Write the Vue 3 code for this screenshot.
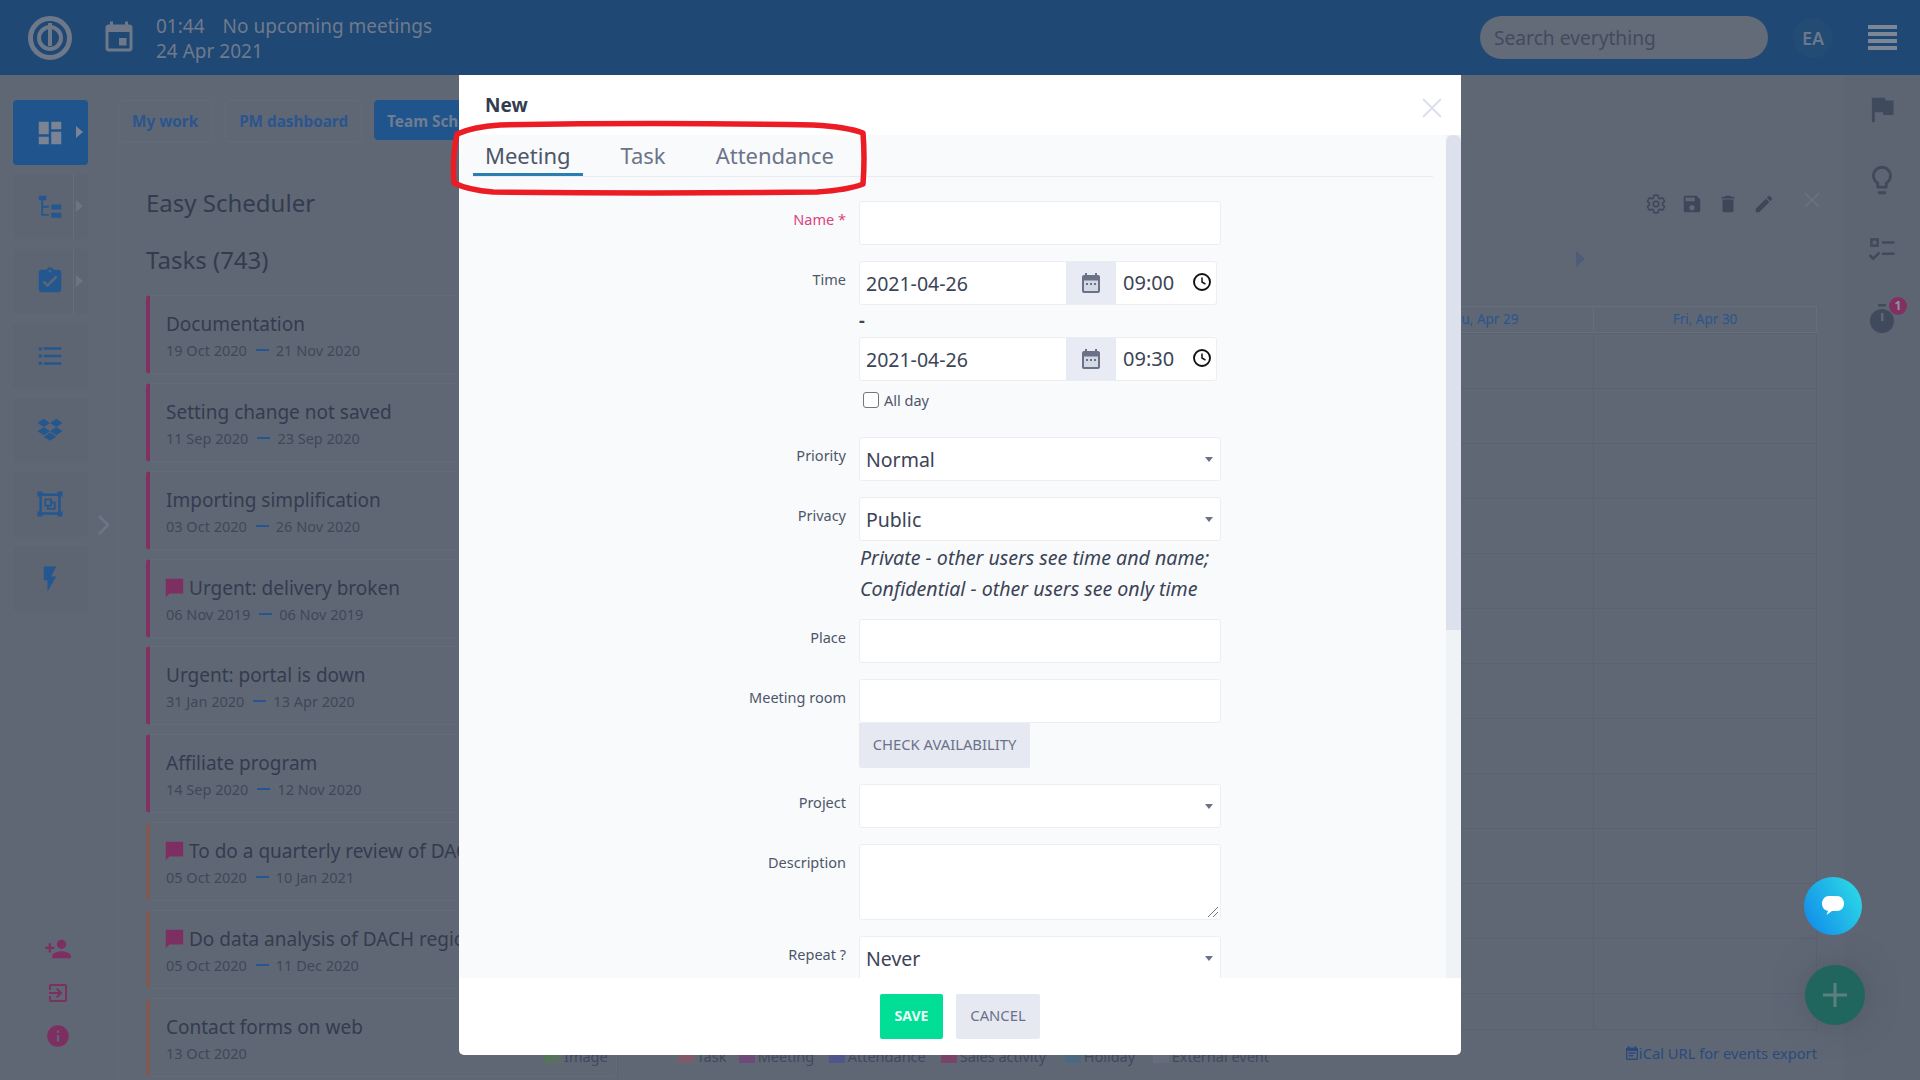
<template>
  <div class="page">
    <header class="topbar">
      <svg class="logo" width="46" height="46" viewBox="0 0 46 46" fill="none">
        <circle cx="23" cy="23" r="19.500" stroke="#6f7889" stroke-width="5"/>
        <circle cx="23" cy="23" r="11" stroke="#6f7889" stroke-width="4"/>
        <rect x="21" y="8" width="4" height="23" fill="#6f7889"/>
      </svg>
      <svg class="cal" width="36" height="36" viewBox="0 0 24 24"><path :d="icons.event" fill="#6f7889"/></svg>
      <div class="clock">
        <div><span class="time">01:44</span>No upcoming meetings</div>
        <div>24 Apr 2021</div>
      </div>
      <div class="search">Search everything</div>
      <div class="avatar">EA</div>
      <div class="burger"><i></i><i></i><i></i><i></i></div>
    </header>

    <div class="layout">
      <aside class="rail">
        <div v-for="(t, i) in tiles" :key="i" class="tile" :class="{ active: i === 0, split: t.arrow && i > 0 }">
          <svg width="30" height="30" viewBox="0 0 24 24"><path :d="t.d" :fill="i === 0 ? '#7a8494' : '#24578f'"/></svg>
          <span v-if="t.arrow" class="tile-arrow"></span>
        </div>
        <svg class="rail-chevron" width="16" height="24" viewBox="0 0 16 24" fill="none"><path d="M3 3l9 9-9 9" stroke="#6d7687" stroke-width="2.500"/></svg>
        <div class="rail-bottom">
          <svg width="28" height="28" viewBox="0 0 24 24"><path :d="icons.personAdd" fill="#7e2f62"/></svg>
          <svg width="24" height="24" viewBox="0 0 24 24"><path :d="icons.exit" fill="#7e2f62"/></svg>
          <svg width="26" height="26" viewBox="0 0 24 24"><path :d="icons.info" fill="#7e2f62"/></svg>
        </div>
      </aside>

      <main class="main">
        <nav class="pills">
          <span class="pill">My work</span>
          <span class="pill">PM dashboard</span>
          <span class="pill current">Team Schedule</span>
        </nav>
        <section class="card">
          <div class="tasks-col">
            <h2 class="sched-title">Easy Scheduler</h2>
            <h2 class="tasks-title">Tasks (743)</h2>
            <div v-for="t in tasks" :key="t.name" class="task" :class="{ brown: t.brown }">
              <div class="task-name">
                <svg v-if="t.flag" width="22" height="22" viewBox="0 0 24 24"><path :d="icons.message" fill="#7e2f62"/></svg>
                {{ t.name }}
              </div>
              <div class="task-dates">
                <span>{{ t.from }}</span>
                <template v-if="t.to"><span class="dash"></span><span>{{ t.to }}</span></template>
              </div>
            </div>
          </div>
          <div class="cal-col">
            <div class="toolbar">
              <svg width="22" height="22" viewBox="0 0 24 24" fill="none"><path :d="icons.gear" stroke="#3d4759" stroke-width="1.700"/><circle cx="12" cy="12" r="3" stroke="#3d4759" stroke-width="1.700"/></svg>
              <svg width="22" height="22" viewBox="0 0 24 24"><path :d="icons.save" fill="#3d4759"/></svg>
              <svg width="22" height="22" viewBox="0 0 24 24"><path :d="icons.trash" fill="#3d4759"/></svg>
              <svg width="22" height="22" viewBox="0 0 24 24"><path :d="icons.edit" fill="#3d4759"/></svg>
              <svg class="tool-x" width="18" height="18" viewBox="0 0 18 18" fill="none"><path d="M2 2l14 14M16 2L2 16" stroke="#6a7382" stroke-width="1.500"/></svg>
            </div>
            <div class="cal-nav"><span class="next"></span></div>
            <div class="cal-head">
              <span>Thu, Apr 29</span>
              <span>Fri, Apr 30</span>
            </div>
            <div class="cal-grid"></div>
            <div class="cal-foot">
              <div class="legend">
                <span class="leg-image"><i class="sw img"></i>Image</span>
                <span v-for="l in legend" :key="l.name" class="leg" :style="{ width: l.width + 'px' }"><i class="sw" :style="{ background: l.color }"></i>{{ l.name }}</span>
              </div>
              <div class="ical">
                <svg width="12" height="14" viewBox="3 1 18 20" preserveAspectRatio="none"><path :d="icons.note" fill="#2a4a7c"/></svg>iCal URL for events export
              </div>
            </div>
          </div>
        </section>
      </main>

      <aside class="side">
        <svg width="26" height="30" viewBox="3 3 18 19"><path :d="icons.flag" fill="#3f4a5d"/></svg>
        <svg width="34" height="34" viewBox="0 0 24 24"><path :d="icons.bulb" fill="#3f4a5d"/></svg>
        <svg width="30" height="30" viewBox="0 0 24 24" fill="none">
          <rect x="3.500" y="3.500" width="5" height="5" stroke="#3f4a5d" stroke-width="2"/>
          <path d="M12 6h10M12 15h10M2 16l3 3 5-5" stroke="#3f4a5d" stroke-width="2"/>
        </svg>
        <div class="timer">
          <svg width="30" height="32" viewBox="0 0 30 32"><rect x="11" y="1" width="8" height="2.500" fill="#3f4a5d"/><circle cx="15" cy="18" r="12" fill="#3f4a5d"/><rect x="14" y="10" width="2.500" height="8" fill="#5f6775"/></svg>
          <span class="badge">1</span>
        </div>
      </aside>
    </div>

    <div class="fab-chat">
      <svg width="24" height="22" viewBox="0 0 24 22"><path d="M8 1h8c4 0 7 3 7 7.500S20 16 16 16h-5l-5.500 4 1.500-4.100C3.500 15.400 1 12.500 1 8.500S4 1 8 1z" fill="#fff"/></svg>
    </div>
    <div class="fab-add">
      <svg width="24" height="24" viewBox="0 0 24 24"><path d="M10.500 0h3v10.500H24v3H13.500V24h-3V13.500H0v-3h10.500z" fill="#5d7f80"/></svg>
    </div>

    <div class="modal">
      <div class="modal-head">
        <span class="modal-title">New</span>
        <svg class="modal-close" width="20" height="20" viewBox="0 0 20 20" fill="none"><path d="M1 1l18 18M19 1L1 19" stroke="#dcdfe9" stroke-width="1.800"/></svg>
      </div>
      <div class="modal-body">
        <div class="tabs">
          <span class="tab active">Meeting</span>
          <span class="tab">Task</span>
          <span class="tab">Attendance</span>
        </div>

        <div class="row">
          <label class="req">Name *</label>
          <div class="field"><div class="input"></div></div>
        </div>

        <div class="row time-row">
          <label>Time</label>
          <div class="field">
            <div class="dt">
              <span class="dt-date">2021-04-26</span>
              <span class="dt-cal"><svg width="24" height="24" viewBox="0 0 24 24"><path :d="icons.dateFill" fill="#6a7288"/><path d="M5 9.500h14V20H5z" fill="#d5d9e4"/><path d="M7 12h2v2H7zM11 12h2v2h-2zM15 12h2v2h-2z" fill="#6a7288"/></svg></span>
              <span class="dt-time">09:00
                <svg width="20" height="20" viewBox="0 0 20 20" fill="none"><circle cx="10" cy="10" r="8" stroke="#111" stroke-width="1.900"/><path d="M10 5.500V10l3.500 2.200" stroke="#111" stroke-width="1.500"/></svg>
              </span>
            </div>
            <div class="sep">-</div>
            <div class="dt">
              <span class="dt-date">2021-04-26</span>
              <span class="dt-cal"><svg width="24" height="24" viewBox="0 0 24 24"><path :d="icons.dateFill" fill="#6a7288"/><path d="M5 9.500h14V20H5z" fill="#d5d9e4"/><path d="M7 12h2v2H7zM11 12h2v2h-2zM15 12h2v2h-2z" fill="#6a7288"/></svg></span>
              <span class="dt-time">09:30
                <svg width="20" height="20" viewBox="0 0 20 20" fill="none"><circle cx="10" cy="10" r="8" stroke="#111" stroke-width="1.900"/><path d="M10 5.500V10l3.500 2.200" stroke="#111" stroke-width="1.500"/></svg>
              </span>
            </div>
            <div class="allday"><span class="check"></span>All day</div>
          </div>
        </div>

        <div class="row">
          <label>Priority</label>
          <div class="field"><div class="input select">Normal</div></div>
        </div>

        <div class="row">
          <label>Privacy</label>
          <div class="field">
            <div class="input select">Public</div>
            <div class="hint">Private - other users see time and name;<br>Confidential - other users see only time</div>
          </div>
        </div>

        <div class="row">
          <label>Place</label>
          <div class="field"><div class="input"></div></div>
        </div>

        <div class="row">
          <label>Meeting room</label>
          <div class="field">
            <div class="input"></div>
            <span class="check-btn">CHECK AVAILABILITY</span>
          </div>
        </div>

        <div class="row">
          <label>Project</label>
          <div class="field"><div class="input select"></div></div>
        </div>

        <div class="row">
          <label>Description</label>
          <div class="field">
            <div class="input area">
              <svg class="grip" width="12" height="12" viewBox="0 0 12 12" fill="none"><path d="M1 11L11 1M6 11l5-5" stroke="#777" stroke-width="1"/></svg>
            </div>
          </div>
        </div>

        <div class="row">
          <label>Repeat ?</label>
          <div class="field"><div class="input select">Never</div></div>
        </div>

        <div class="scrollbar"><div class="thumb"></div></div>
      </div>
      <div class="modal-foot">
        <span class="btn save">SAVE</span>
        <span class="btn cancel">CANCEL</span>
      </div>
    </div>

    <svg class="marker" width="420" height="76" viewBox="0 0 420 76" fill="none">
      <path d="M7 14 Q22 7 50 5 Q200 2 363 5 Q398 7 413 13 Q415 38 413 64 Q398 70 367 72 Q200 74 43 72 Q18 70 4 63 Q2 38 7 14 Z" stroke="#ec1c24" stroke-width="5.500" stroke-linejoin="round"/>
    </svg>
  </div>
</template>

<script setup>
const icons = {
  event: 'M17 12h-5v5h5v-5zM16 1v2H8V1H6v2H5c-1.110 0-1.990.9-1.990 2L3 19c0 1.100.89 2 2 2h14c1.100 0 2-.9 2-2V5c0-1.100-.9-2-2-2h-1V1h-2zm3 18H5V8h14v11z',
  dashboard: 'M3 13h8V3H3v10zm0 8h8v-6H3v6zm10 0h8V11h-8v10zm0-18v6h8V3h-8z',
  tree: 'M3 3h6v3.500H3zM5 6.500h1.500V11H11v1.500H6.500v5H11V19H5zM13 10h8v4h-8zM13 16.500h8v4h-8z',
  assign: 'M19 3h-4.180C14.400 1.840 13.300 1 12 1c-1.300 0-2.400.84-2.820 2H5c-1.100 0-2 .9-2 2v14c0 1.100.9 2 2 2h14c1.100 0 2-.9 2-2V5c0-1.100-.9-2-2-2zm-7 0c.55 0 1 .45 1 1s-.45 1-1 1-1-.45-1-1 .45-1 1-1zm-2 14l-4-4 1.410-1.410L10 14.170l6.590-6.590L18 9l-8 8z',
  list: 'M3 5h2.500v2.500H3zM7 5h14v2H7zM3 10.800h2.500v2.500H3zM7 11h14v2H7zM3 16.500h2.500V19H3zM7 17h14v2H7z',
  dropbox: 'M7 3L2 6.300 7 9.600l5-3.300zM17 3l-5 3.300 5 3.300 5-3.300zM2 12.900l5 3.300 5-3.300-5-3.300zM17 9.600l-5 3.300 5 3.300 5-3.300zM7 17.300l5 3.300 5-3.300-5-3.300z',
  select: 'M2 2h4v1.500h12V2h4v4h-1.500v12H22v4h-4v-1.500H6V22H2v-4h1.500V6H2zM5.500 5.500v13h13v-13zM7.500 7.500h6v2.500h3v6.500h-7V14h-2zM9 9v3.500h3V9zM11 14v1h4v-3.500h-1.500V14z',
  flash: 'M7 2v11h3v9l7-12h-4l4-8z',
  personAdd: 'M15 12c2.210 0 4-1.790 4-4s-1.790-4-4-4-4 1.790-4 4 1.790 4 4 4zm-9-2V7H4v3H1v2h3v3h2v-3h3v-2H6zm9 4c-2.670 0-8 1.340-8 4v2h16v-2c0-2.660-5.330-4-8-4z',
  exit: 'M10.090 15.590L11.500 17l5-5-5-5-1.410 1.410L12.670 11H3v2h9.670l-2.580 2.590zM19 3H5c-1.110 0-2 .9-2 2v4h2V5h14v14H5v-4H3v4c0 1.100.89 2 2 2h14c1.100 0 2-.9 2-2V5c0-1.100-.9-2-2-2z',
  info: 'M12 2C6.480 2 2 6.480 2 12s4.480 10 10 10 10-4.480 10-10S17.520 2 12 2zm1 15h-2v-6h2v6zm0-8h-2V7h2v2z',
  message: 'M22 2H3v20l4-4h15z',
  gear: 'M19.140 12.940c.04-.3.06-.61.06-.94 0-.32-.02-.64-.07-.94l2.030-1.580c.18-.14.23-.41.12-.61l-1.920-3.320c-.12-.22-.37-.29-.59-.22l-2.390.96c-.5-.38-1.030-.7-1.620-.94l-.36-2.540c-.04-.24-.24-.41-.48-.41h-3.840c-.24 0-.43.17-.47.41l-.36 2.540c-.59.24-1.130.57-1.620.94l-2.390-.96c-.22-.08-.47 0-.59.22L2.740 8.870c-.12.21-.08.47.12.61l2.030 1.580c-.05.3-.09.63-.09.94s.02.64.07.94l-2.030 1.580c-.18.14-.23.41-.12.61l1.920 3.320c.12.22.37.29.59.22l2.390-.96c.5.38 1.030.7 1.620.94l.36 2.540c.05.24.24.41.48.41h3.840c.24 0 .44-.17.47-.41l.36-2.540c.59-.24 1.130-.56 1.620-.94l2.390.96c.22.08.47 0 .59-.22l1.920-3.320c.12-.22.07-.47-.12-.61l-2.010-1.580z',
  save: 'M17 3H5c-1.110 0-2 .9-2 2v14c0 1.100.89 2 2 2h14c1.100 0 2-.9 2-2V7l-4-4zm-5 16c-1.660 0-3-1.340-3-3s1.340-3 3-3 3 1.340 3 3-1.340 3-3 3zm3-10H5V5h10v4z',
  trash: 'M6 19c0 1.100.9 2 2 2h8c1.100 0 2-.9 2-2V7H6v12zM19 4h-3.500l-1-1h-5l-1 1H5v2h14V4z',
  edit: 'M3 17.250V21h3.750L17.810 9.940l-3.750-3.750L3 17.250zM20.710 7.040c.39-.39.39-1.020 0-1.410l-2.340-2.340c-.39-.39-1.020-.39-1.410 0l-1.830 1.830 3.750 3.750 1.830-1.830z',
  flag: 'M14.400 6L14 4H5v17h2v-7h5.600l.4 2h7V6z',
  bulb: 'M9 21c0 .55.45 1 1 1h4c.55 0 1-.45 1-1v-1H9v1zm3-19C8.140 2 5 5.140 5 9c0 2.380 1.190 4.470 3 5.740V17c0 .55.45 1 1 1h6c.55 0 1-.45 1-1v-2.260c1.810-1.270 3-3.360 3-5.740 0-3.860-3.140-7-7-7zm2.850 11.100l-.85.6V16h-4v-2.300l-.85-.6A4.997 4.997 0 0 1 7 9c0-2.760 2.240-5 5-5s5 2.240 5 5c0 1.630-.8 3.160-2.150 4.100z',
  note: 'M19 3h-1V1h-2v2H8V1H6v2H5c-1.100 0-2 .9-2 2v14c0 1.100.9 2 2 2h14c1.100 0 2-.9 2-2V5c0-1.100-.9-2-2-2zm0 16H5V8h14v11zM7 10h10v2H7zm0 4h7v2H7z',
  dateFill: 'M19 4h-1V2h-2v2H8V2H6v2H5c-1.110 0-1.990.9-1.990 2L3 20c0 1.100.89 2 2 2h14c1.100 0 2-.9 2-2V6c0-1.100-.9-2-2-2z'
}

const tiles = [
  { d: icons.dashboard, arrow: true },
  { d: icons.tree, arrow: true },
  { d: icons.assign, arrow: true },
  { d: icons.list },
  { d: icons.dropbox },
  { d: icons.select },
  { d: icons.flash }
]

const tasks = [
  { name: 'Documentation', from: '19 Oct 2020', to: '21 Nov 2020' },
  { name: 'Setting change not saved', from: '11 Sep 2020', to: '23 Sep 2020' },
  { name: 'Importing simplification', from: '03 Oct 2020', to: '26 Nov 2020' },
  { name: 'Urgent: delivery broken', from: '06 Nov 2019', to: '06 Nov 2019', flag: true },
  { name: 'Urgent: portal is down', from: '31 Jan 2020', to: '13 Apr 2020' },
  { name: 'Affiliate program', from: '14 Sep 2020', to: '12 Nov 2020' },
  { name: 'To do a quarterly review of DACH', from: '05 Oct 2020', to: '10 Jan 2021', flag: true, brown: true },
  { name: 'Do data analysis of DACH region', from: '05 Oct 2020', to: '11 Dec 2020', flag: true, brown: true },
  { name: 'Contact forms on web', from: '13 Oct 2020', brown: true }
]

const legend = [
  { name: 'Task', color: '#7f5a68', width: 61 },
  { name: 'Meeting', color: '#6f4a78', width: 90 },
  { name: 'Attendance', color: '#50558a', width: 112 },
  { name: 'Sales activity', color: '#7a4468', width: 124 },
  { name: 'Holiday', color: '#4a6a82', width: 88 },
  { name: 'External event', color: '#666c7c', width: 120 }
]
</script>

<style>
html, body { margin: 0; background: #5f6775; }
</style>

<style scoped>
* { box-sizing: border-box; }

.page {
  position: relative;
  width: 1920px;
  height: 1080px;
  overflow: hidden;
  background: #5f6775;
  font-family: "Noto Sans", "Open Sans", sans-serif;
  color: #3e4759;
}

.topbar {
  height: 75px;
  background: #1f4875;
  display: flex;
  align-items: center;
  padding: 0 23px 0 27px;
}
.cal { margin-left: 28px; }
.clock {
  margin-left: 19px;
  padding-top: 2px;
  font-size: 19px;
  line-height: 25px;
  color: #6f7a8c;
}
.time { margin-right: 18px; }
.search {
  margin-left: auto;
  width: 288px;
  height: 43px;
  border-radius: 22px;
  background: #636b79;
  color: #414b5d;
  font-size: 19.200px;
  line-height: 43px;
  padding-left: 14px;
}
.avatar {
  width: 40px;
  height: 40px;
  margin-left: 25px;
  border-radius: 50%;
  background: #234b73;
  color: #69788c;
  font-size: 18px;
  font-weight: 600;
  line-height: 40px;
  text-align: center;
}
.burger {
  width: 29px;
  margin-left: 35px;
  display: flex;
  flex-direction: column;
  gap: 3px;
}
.burger i { height: 4px; background: #7d8695; }

.layout { display: flex; height: 1005px; }

.rail {
  position: relative;
  width: 118px;
  flex: none;
  padding: 25px 0 0 13px;
  display: flex;
  flex-direction: column;
  gap: 9.400px;
}
.tile {
  position: relative;
  width: 75px;
  height: 65px;
  border-radius: 4px;
  background: #5d6573;
  display: flex;
  align-items: center;
  padding-left: 22px;
}
.tile.active { background: #1f548c; }
.tile.split::before {
  content: "";
  position: absolute;
  left: 60px;
  top: 0;
  bottom: 0;
  width: 1px;
  background: #666e7b;
}
.tile-arrow {
  position: absolute;
  right: 5px;
  top: 26px;
  border-left: 7px solid #6b7483;
  border-top: 6px solid transparent;
  border-bottom: 6px solid transparent;
}
.tile.active .tile-arrow { border-left-color: #7a8494; }
.rail-chevron { position: absolute; left: 96px; top: 438px; }
.rail-bottom {
  position: absolute;
  left: 44px;
  top: 860px;
  display: flex;
  flex-direction: column;
  align-items: center;
  gap: 18px;
}

.main { flex: 1; min-width: 0; }
.pills { height: 67px; padding-top: 25px; display: flex; gap: 13px; }
.pill {
  height: 42px;
  padding: 0 13px;
  border: 1px solid #636b79;
  border-radius: 4px;
  color: #2a558d;
  font-size: 15.300px;
  font-weight: 700;
  line-height: 40px;
}
.pill.current {
  height: 40px;
  width: 88px;
  margin-left: -1px;
  padding: 0 0 0 12px;
  background: #1f548c;
  border-color: #1f548c;
  color: #6f7d90;
  overflow: hidden;
  white-space: nowrap;
}

.card {
  display: flex;
  height: 938px;
  border-left: 1px solid #626a78;
}
.tasks-col { width: 499px; padding: 44px 0 0 27px; border-right: 1px solid #5a6270; flex: none; }
.sched-title, .tasks-title {
  margin: 0;
  font-size: 24px;
  font-weight: 400;
  color: #333c4e;
}
.sched-title { line-height: 34px; }
.tasks-title { margin-top: 23px; line-height: 34px; margin-bottom: 18px; }
.task {
  height: 79px;
  margin-bottom: 8.850px;
  border: 1px solid #636b79;
  border-left: 4px solid #82305f;
  border-radius: 4px;
  padding: 13px 0 0 16px;
  white-space: nowrap;
}
.task.brown { border-left-color: #7f5a52; }
.task-name {
  display: flex;
  align-items: center;
  gap: 4px;
  height: 30px;
  font-size: 19px;
  color: #333c4e;
}
.task-name svg { margin-left: -3px; }
.task-dates {
  display: flex;
  align-items: center;
  margin-top: 1px;
  font-size: 14.500px;
  color: #3e4759;
}
.dash { width: 13px; height: 2px; margin: 0 7px 0 9px; background: #25568f; }

.cal-col { flex: 1; padding-right: 27px; position: relative; }
.toolbar {
  display: flex;
  justify-content: flex-end;
  align-items: flex-start;
  gap: 14px;
  height: 75px;
  padding: 51px 0 0 0;
}
.tool-x { margin-left: 14px; margin-right: -4px; margin-top: -2px; }
.cal-nav { height: 89px; position: relative; }
.next {
  position: absolute;
  right: 232px;
  top: 34px;
  border-left: 9px solid #4f5b78;
  border-top: 8px solid transparent;
  border-bottom: 8px solid transparent;
}
.cal-head {
  display: grid;
  grid-template-columns: 223px 223px;
  justify-content: end;
  height: 27px;
  border-top: 1px solid #666e7b;
  border-bottom: 1px solid #666e7b;
  font-size: 13.500px;
  line-height: 25px;
  color: #2a558d;
  text-align: center;
}
.cal-head span { border-right: 1px solid #666e7b; }
.cal-grid {
  height: 697px;
  background:
    linear-gradient(#5a6270 1px, transparent 1px) 0 0 / 100% 55px,
    linear-gradient(90deg, #5a6270 1px, transparent 1px) right 0 top 0 / 223px 100%;
  border-right: 1px solid #5a6270;
  border-bottom: 1px solid #5a6270;
}
.cal-foot { position: relative; }
.legend {
  position: absolute;
  left: 0;
  top: 0;
  display: flex;
  align-items: center;
  font-size: 14.500px;
  color: #414a5c;
  white-space: nowrap;
  height: 52px;
}
.leg, .leg-image { display: inline-flex; align-items: center; gap: 3px; flex: none; }
.leg-image { margin-right: 70px; margin-left: -73px; }
.sw { display: inline-block; width: 16px; height: 14px; flex: none; }
.sw.img { background: linear-gradient(135deg, #4e7a52 50%, #5a7060 50%); }
.ical {
  position: absolute;
  right: 0;
  top: 13px;
  font-size: 14.700px;
  color: #2a4a7c;
  display: flex;
  align-items: center;
  gap: 1px;
  white-space: nowrap;
}

.side {
  width: 76px;
  flex: none;
  padding-top: 20px;
  display: flex;
  flex-direction: column;
  align-items: center;
  gap: 38px;
  background: #5d6573;
}
.timer { position: relative; height: 32px; }
.badge {
  position: absolute;
  left: 22px;
  top: -6px;
  width: 18px;
  height: 18px;
  border-radius: 50%;
  background: #82305f;
  color: #8f94a4;
  font-size: 12px;
  font-weight: 700;
  line-height: 18px;
  text-align: center;
}

.fab-chat, .fab-add {
  position: absolute;
  border-radius: 50%;
  display: flex;
  align-items: center;
  justify-content: center;
}
.fab-chat {
  left: 1804px;
  top: 877px;
  width: 58px;
  height: 58px;
  background: linear-gradient(60deg, #0f86ea, #2fe0e6);
}
.fab-add {
  left: 1805px;
  top: 965px;
  width: 60px;
  height: 60px;
  background: #20665f;
  box-shadow: 0 0 30px rgba(70, 75, 90, 0.5);
}

.modal {
  position: absolute;
  left: 459px;
  top: 75px;
  width: 1002px;
  height: 980px;
  border-radius: 0 0 5px 5px;
  background: #fff;
  display: flex;
  flex-direction: column;
}
.modal-head {
  position: relative;
  height: 60px;
  flex: none;
  padding: 17px 0 0 26px;
}
.modal-title { font-size: 19px; font-weight: 700; color: #333c4e; }
.modal-close { position: absolute; right: 19px; top: 23px; }
.modal-body {
  position: relative;
  flex: 1;
  min-height: 0;
  overflow: hidden;
  background: #f9fafc;
}
.tabs {
  display: flex;
  height: 42px;
  margin: 0 28px 24px 14px;
  border-bottom: 1px solid #e8ebf1;
}
.tab {
  padding: 0 12px;
  margin-right: 26px;
  font-size: 22px;
  line-height: 40px;
  color: #6b7489;
  height: 41px;
}
.tab.active {
  color: #4d5669;
  border-bottom: 3px solid #2b7fb0;
}

.row {
  display: grid;
  grid-template-columns: 387px 362px;
  column-gap: 13px;
  margin-bottom: 16px;
}
.row label {
  text-align: right;
  font-size: 14.500px;
  line-height: 20px;
  padding-top: 8px;
  color: #4d5669;
}
.row label.req { color: #d9447f; }
.input {
  position: relative;
  height: 44px;
  background: #fff;
  border: 1px solid #eceef3;
  border-radius: 3px;
  padding-left: 6px;
  font-size: 19.500px;
  line-height: 43px;
  color: #3b4456;
}
.select::after {
  content: "";
  position: absolute;
  right: 7px;
  top: 19px;
  border-top: 5px solid #6a7288;
  border-left: 4px solid transparent;
  border-right: 4px solid transparent;
}
.area { height: 76px; }
.grip { position: absolute; right: 1px; bottom: 1px; }

.time-row { margin-bottom: 27px; }
.dt {
  display: flex;
  width: 358px;
  height: 44px;
  background: #fff;
  border: 1px solid #eceef3;
  border-radius: 3px;
  font-size: 19.500px;
  color: #3b4456;
}
.dt-date { width: 206px; padding-left: 6px; line-height: 43px; }
.dt-cal {
  width: 50px;
  background: #e8ebf3;
  display: flex;
  align-items: center;
  justify-content: center;
}
.dt-time {
  flex: 1;
  padding: 0 4px 0 7px;
  display: flex;
  align-items: center;
  justify-content: space-between;
  margin-top: -2px;
  font-size: 20px;
}
.sep { height: 32px; line-height: 30px; font-size: 18px; font-weight: 700; }
.allday {
  display: flex;
  align-items: center;
  gap: 5px;
  margin: 9px 0 0 4px;
  font-size: 14.500px;
  color: #4d5669;
  height: 20px;
}
.check {
  width: 16px;
  height: 16px;
  border: 1px solid #767676;
  border-radius: 3px;
  background: #fff;
}

.hint {
  padding: 1px 0 0 1px;
  margin-bottom: -1px;
  font-size: 19.600px;
  font-style: italic;
  line-height: 31px;
  white-space: nowrap;
  color: #3b4456;
}

.check-btn {
  display: block;
  width: 171px;
  height: 45px;
  background: #e6e9f2;
  border-radius: 0 0 2px 2px;
  color: #6a7288;
  font-size: 14.800px;
  line-height: 43px;
  text-align: center;
  white-space: nowrap;
}

.scrollbar {
  position: absolute;
  right: 0;
  top: 0;
  bottom: 0;
  width: 15px;
  background: #eff3f6;
}
.thumb {
  height: 495px;
  background: #dde1ee;
  border-radius: 7px 7px 0 0;
}

.modal-foot {
  height: 77px;
  flex: none;
  display: flex;
  justify-content: center;
  align-items: flex-start;
  gap: 13px;
  padding: 16px 0 0 0;
}
.btn {
  height: 45px;
  border-radius: 2px;
  font-size: 14.800px;
  line-height: 43px;
  text-align: center;
}
.save { width: 63px; background: #00df95; color: #e9fff7; font-weight: 700; font-size: 14px; }
.cancel { width: 84px; background: #e6e9f2; color: #6a7288; }

.marker { position: absolute; left: 450px; top: 120px; }
</style>
